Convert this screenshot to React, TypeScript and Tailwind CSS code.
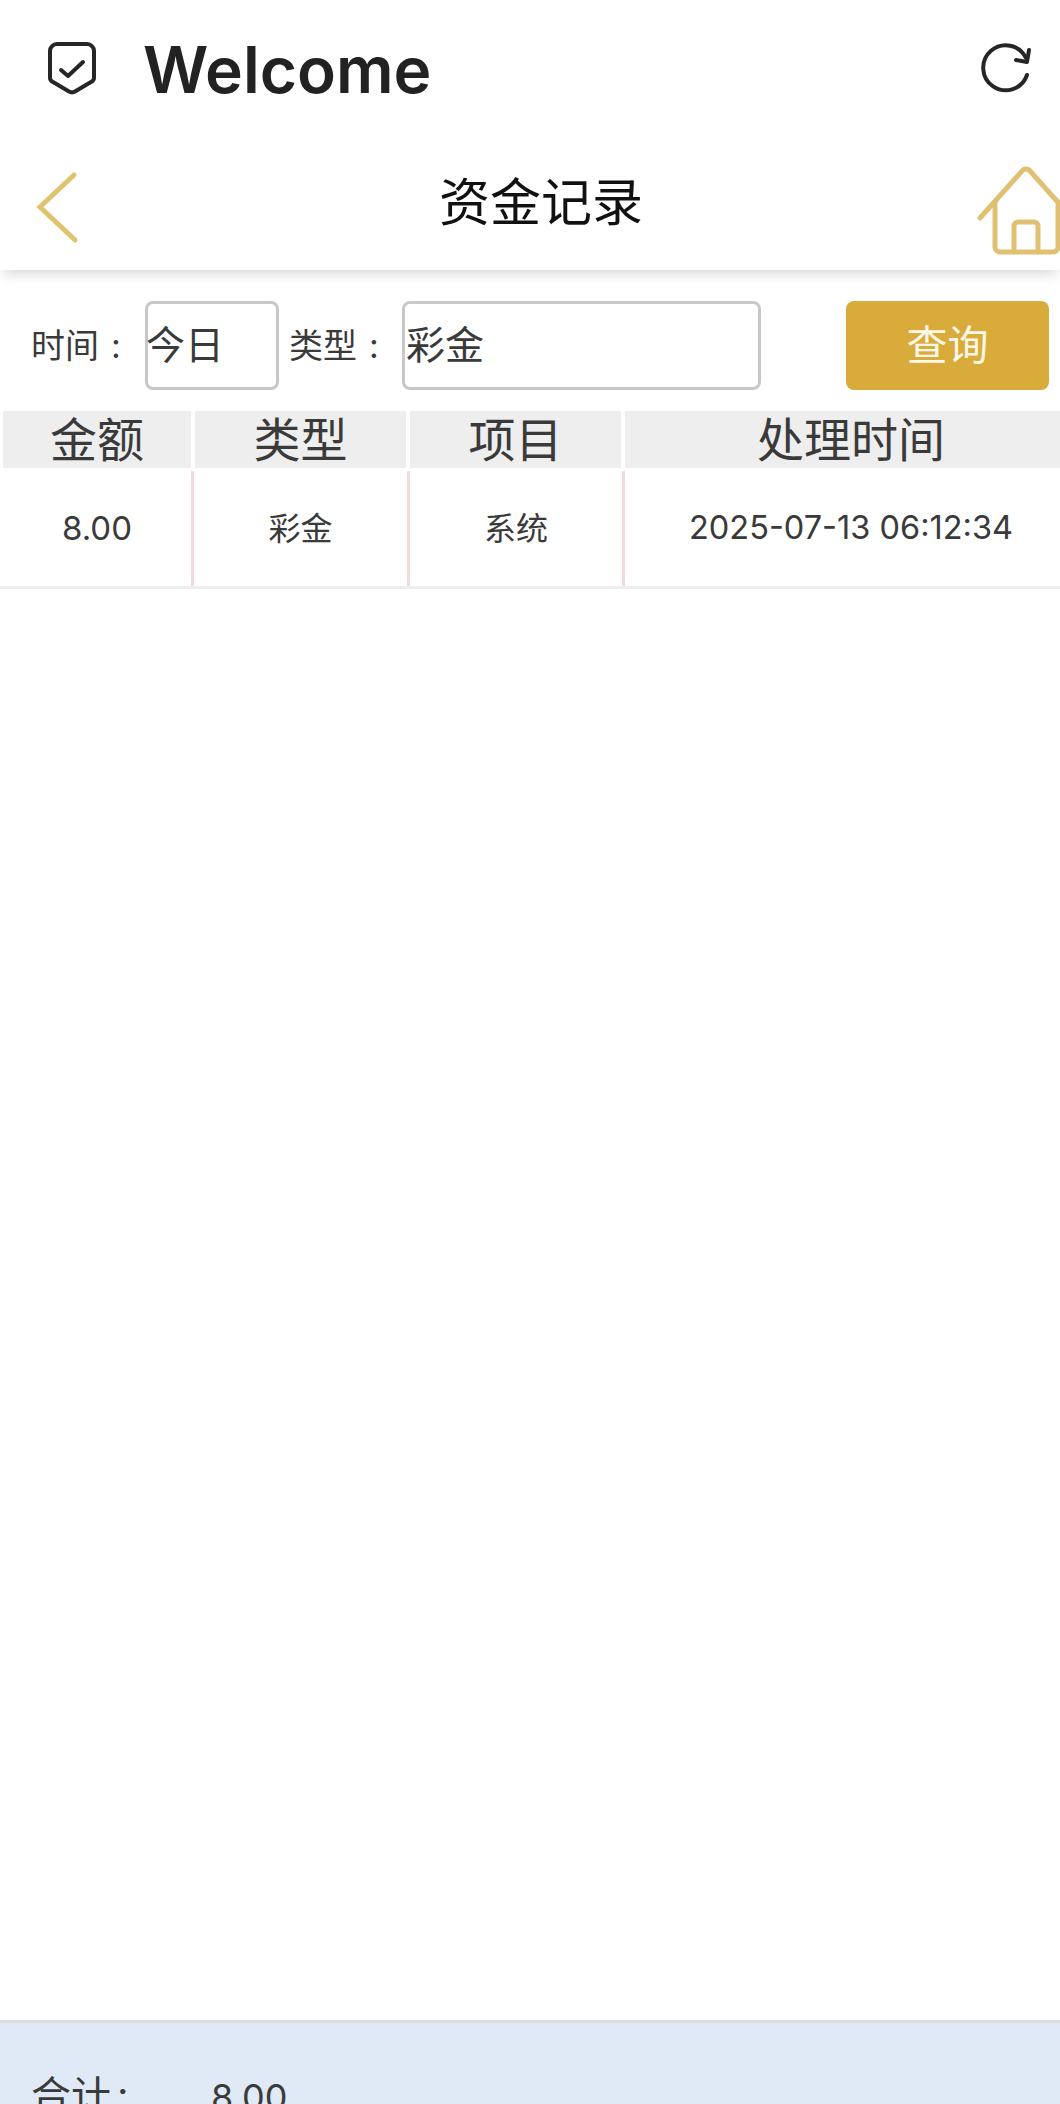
const cjk = "font-['Inter','Noto_Sans_CJK_SC',sans-serif]";

function ShieldIcon() {
  return (
    <svg width="50" height="56" viewBox="0 0 50 56" fill="none" stroke="#262626" strokeWidth="4" strokeLinecap="round" strokeLinejoin="round">
      <path d="M10 4h30a7 7 0 0 1 7 7v27c0 2-1 3-3 4l-16 9.500a6 6 0 0 1-6 0L6 42c-2-1-3-2-3-4V11a7 7 0 0 1 7-7z" />
      <path d="M14 30l7 6 15-14" />
    </svg>
  );
}

function RefreshIcon() {
  return (
    <svg width="52" height="52" viewBox="0 0 52 52" fill="none" stroke="#262626" strokeWidth="4" strokeLinecap="round" strokeLinejoin="round">
      <path d="M47 33A22.500 22.500 0 1 1 46 16" />
      <path d="M49 8l-2 12-11-2" />
    </svg>
  );
}

function BackIcon() {
  return (
    <svg width="43" height="73" viewBox="0 0 43 73" fill="none" stroke="#e0c36f" strokeWidth="5" strokeLinecap="round">
      <path d="M38 4L4 36l35 33" />
    </svg>
  );
}

function HomeIcon() {
  return (
    <svg width="98" height="90" viewBox="0 0 98 90" fill="none" stroke="#e0c173" strokeWidth="5" strokeLinecap="round" strokeLinejoin="round">
      <path d="M3 53L45 6a5 5 0 0 1 8 0l42 47" />
      <path d="M18 37v45a5 5 0 0 0 5 5h53a5 5 0 0 0 5-5V37" />
      <path d="M37 87V61a4 4 0 0 1 4-4h16a4 4 0 0 1 4 4v26" />
    </svg>
  );
}

const columns = [
  { title: '金额', value: '8.00', size: 'text-[33px]' },
  { title: '类型', value: '彩金', size: 'text-[32px]' },
  { title: '项目', value: '系统', size: 'text-[32px]' },
  { title: '处理时间', value: '2025-07-13 06:12:34', size: 'text-[32.500px]' },
];

export default function App() {
  return (
    <div className={`flex h-[2104px] w-[1060px] flex-col overflow-hidden bg-white text-[#3a3a3a] ${cjk}`}>
      <div className="flex h-[135px] items-center justify-between pl-[47px] pr-[28px]">
        <div className="flex items-center gap-[46px]">
          <ShieldIcon />
          <span className="mt-[4px] text-[64px] font-semibold text-[#222]">Welcome</span>
        </div>
        <RefreshIcon />
      </div>

      <div className="flex h-[135px] items-center justify-between overflow-hidden pl-[36px] shadow-[0_8px_12px_-4px_rgba(0,0,0,0.16)]">
        <div className="mt-[9px]">
          <BackIcon />
        </div>
        <span className="ml-[26px] mt-[2px] text-[51px] text-[#111]">资金记录</span>
        <div className="-mr-[15px] mt-[14px]">
          <HomeIcon />
        </div>
      </div>

      <div className="mt-[31px] flex h-[89px] items-center pl-[31px] pr-[11px]">
        <span className="flex w-[114px] text-[34px]">
          时间<span className="ml-[12px]">:</span>
        </span>
        <div className="flex h-full w-[134px] items-center rounded-[8px] border-[3px] border-[#c8c8c8] indent-[-2px] text-[39px]">今日</div>
        <span className="ml-[10px] flex w-[113px] text-[34px]">
          类型<span className="ml-[12px]">:</span>
        </span>
        <div className="flex h-full w-[359px] items-center rounded-[8px] border-[3px] border-[#c8c8c8] pl-[1px] text-[39px]">彩金</div>
        <button className="ml-auto h-full w-[203px] rounded-[8px] bg-[#d9ab3a] text-[41px] text-[#fdf8e8]">查询</button>
      </div>

      <div className="mt-[21px] grid grid-cols-[188px_211px_211px_452px] gap-x-[4px] pl-[3px]">
        {columns.map((col) => (
          <div key={col.title} className="flex h-[57px] items-center justify-center bg-[#eee] pt-[2px] text-[47px]">
            {col.title}
          </div>
        ))}
      </div>

      <div className="mt-[3px] grid h-[118px] grid-cols-[191px_216px_215px_452px] border-b-[3px] border-[#eee] pl-[3px]">
        {columns.map((col, i) => (
          <div
            key={col.title}
            className={`flex items-center justify-center ${col.size} ${i < 3 ? 'border-r-[3px] border-[#f2d9da]' : ''}`}
          >
            {col.value}
          </div>
        ))}
      </div>

      <div className="flex-1" />

      <div className="h-[84px] border-t-[3px] border-[#ddd] bg-[#e0eaf6] pl-[31px] pt-[43px]">
        <div className="flex items-baseline leading-[60px]">
          <span className="flex w-[180px] text-[40px]">
            合计<span className="ml-[6px]">:</span>
          </span>
          <span className="text-[36px]">8.00</span>
        </div>
      </div>
    </div>
  );
}
